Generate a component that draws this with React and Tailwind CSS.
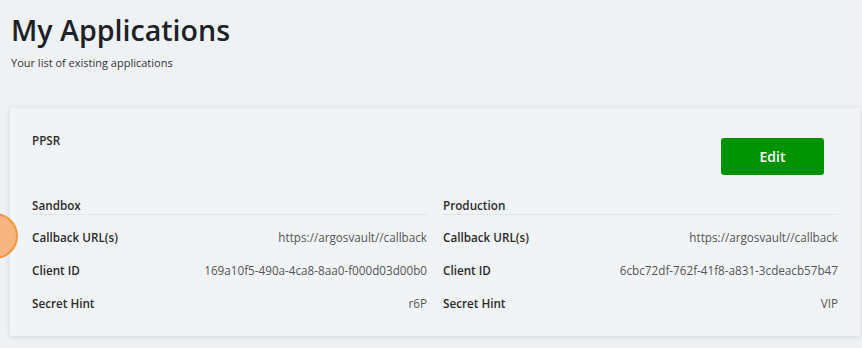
import React from "react";

function Row({ label, value }) {
  return (
    <div className="flex items-center justify-between h-[33px]">
      <span className="font-semibold text-[#2b2b2b]">{label}</span>
      <span className="text-[#555]">{value}</span>
    </div>
  );
}

function Env({ title, rows }) {
  return (
    <div className="flex-1">
      <div className="font-semibold text-[#2b2b2b] pb-[1px] border-b border-[#e2e6e9] leading-[16px]">{title}</div>
      <div className="pt-[7px]">
        {rows.map((r) => (
          <Row key={r[0]} label={r[0]} value={r[1]} />
        ))}
      </div>
    </div>
  );
}

export default function App() {
  return (
    <div
      className="relative w-[862px] h-[348px] overflow-hidden bg-[#eff2f4] text-[11.7px]"
      style={{ fontFamily: '"Open Sans", "Liberation Sans", sans-serif' }}
    >
      <div className="pl-[11px] pt-[12px]">
        <h1 className="text-[28.6px] leading-[36px] font-semibold text-[#1d2227]">My Applications</h1>
        <p className="mt-[7px] text-[11px] text-[#333]">Your list of existing applications</p>
      </div>
      <div className="ml-[10px] mr-[2px] mt-[36px] bg-[#f1f4f6] shadow-[0_1px_6px_rgba(0,0,0,0.12)] px-[22px] pt-[24px] pb-[15px]">
        <div className="flex justify-between">
          <div className="font-semibold text-[#2b2b2b] leading-[16px]">PPSR</div>
          <button className="mt-[6px] mr-[14px] w-[103px] h-[37px] rounded-[3px] bg-[#009200] text-white font-semibold text-[14px]">
            Edit
          </button>
        </div>
        <div className="flex gap-[16px] mt-[22px]">
          <Env
            title="Sandbox"
            rows={[
              ["Callback URL(s)", "https://argosvault//callback"],
              ["Client ID", "169a10f5-490a-4ca8-8aa0-f000d03d00b0"],
              ["Secret Hint", "r6P"],
            ]}
          />
          <Env
            title="Production"
            rows={[
              ["Callback URL(s)", "https://argosvault//callback"],
              ["Client ID", "6cbc72df-762f-41f8-a831-3cdeacb57b47"],
              ["Secret Hint", "VIP"],
            ]}
          />
        </div>
      </div>
      <div className="absolute left-[-28px] top-[213px] w-[46px] h-[46px] rounded-full bg-[#f8b47e] border-2 border-[#f4963f]" />
    </div>
  );
}
